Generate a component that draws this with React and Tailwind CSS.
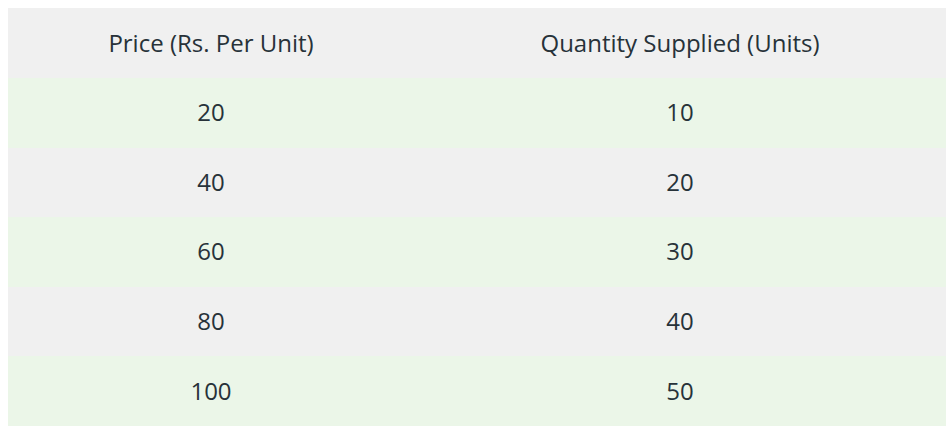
const rows = [
  ["20", "10"],
  ["40", "20"],
  ["60", "30"],
  ["80", "40"],
  ["100", "50"],
];

export default function App() {
  return (
    <div className="bg-white w-[949px] h-[436px] pt-2 pl-2 font-['Open_Sans',sans-serif] text-[#273239]">
      <table className="w-[938px] border-collapse text-[24px] leading-[33px]">
        <thead>
          <tr className="bg-[#f0f0f0] h-[70px]">
            <th className="w-[406px] pb-[2px] font-normal text-center">Price (Rs. Per Unit)</th>
            <th className="pb-[2px] font-normal text-center">Quantity Supplied (Units)</th>
          </tr>
        </thead>
        <tbody>
          {rows.map((r, i) => (
            <tr
              key={i}
              className={i % 2 === 0 ? "bg-[#ebf6e8] h-[69.6px]" : "bg-[#f0f0f0] h-[69.6px]"}
            >
              <td className="pb-[2px] text-center">{r[0]}</td>
              <td className="pb-[2px] text-center">{r[1]}</td>
            </tr>
          ))}
        </tbody>
      </table>
    </div>
  );
}
